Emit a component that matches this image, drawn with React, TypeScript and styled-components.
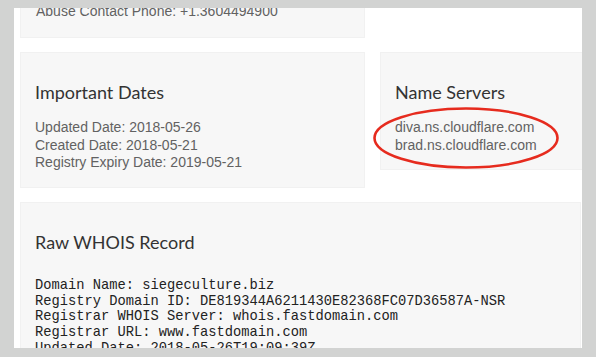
import React from 'react';
import styled, { createGlobalStyle } from 'styled-components';

const GlobalStyle = createGlobalStyle`
  html, body {
    margin: 0;
    padding: 0;
    background: #d2d3d2;
  }
`;

const importantDates = [
  'Updated Date: 2018-05-26',
  'Created Date: 2018-05-21',
  'Registry Expiry Date: 2019-05-21',
];

const nameServers = ['diva.ns.cloudflare.com', 'brad.ns.cloudflare.com'];

const rawWhois = [
  'Domain Name: siegeculture.biz',
  'Registry Domain ID: DE819344A6211430E82368FC07D36587A-NSR',
  'Registrar WHOIS Server: whois.fastdomain.com',
  'Registrar URL: www.fastdomain.com',
  'Updated Date: 2018-05-26T19:09:39Z',
  'Creation Date: 2018-05-21T15:30:18Z',
];

const App: React.FC = () => {
  return (
    <>
      <GlobalStyle />
      <Frame>
        <Window>
          <Page>
            <Row>
              <Card $top>
                <Line>Abuse Contact Phone: +1.3604494900</Line>
              </Card>
            </Row>

            <Row $bleed>
              <Card>
                <Heading>Important Dates</Heading>
                <Lines>
                  {importantDates.map((d) => (
                    <Line key={d}>{d}</Line>
                  ))}
                </Lines>
              </Card>
              <Card>
                <Heading>Name Servers</Heading>
                <Lines>
                  {nameServers.map((ns) => (
                    <Line key={ns}>{ns}</Line>
                  ))}
                </Lines>
                <Circle viewBox="0 0 190 66">
                  <ellipse
                    cx="95"
                    cy="33"
                    rx="91.5"
                    ry="29.5"
                    fill="none"
                    stroke="#e62b1e"
                    strokeWidth="2.6"
                  />
                </Circle>
              </Card>
            </Row>

            <Card $wide>
              <Heading>Raw WHOIS Record</Heading>
              <Record>{rawWhois.join('\n')}</Record>
            </Card>
          </Page>
        </Window>
      </Frame>
    </>
  );
};

export default App;

const Frame = styled.div`
  height: 357px;
  box-sizing: border-box;
  padding: 8px 14px 9px 14px;
  overflow: hidden;
`;

const Window = styled.div`
  height: 340px;
  background: #fff;
  overflow: hidden;
`;

const Page = styled.div`
  display: flex;
  flex-direction: column;
  gap: 14px;
  margin-top: -6px;
  padding: 0 1px 0 6px;
`;

const Row = styled.div<{ $bleed?: boolean }>`
  display: grid;
  grid-template-columns: 345px 1fr;
  gap: 15px;
  align-items: start;
  margin-right: ${(p) => (p.$bleed ? '-20px' : '0')};
`;

const Card = styled.div<{ $top?: boolean; $wide?: boolean }>`
  position: relative;
  background: #f7f7f7;
  border: 1px solid #f1f1f1;
  box-sizing: border-box;
  padding: ${(p) => (p.$top ? '0 15px 16px' : '29px 14px 15px')};
  min-height: ${(p) => (p.$wide ? '200px' : 'auto')};
`;

const Heading = styled.h3`
  margin: 0 0 16px;
  font-family: Lato, 'Open Sans', sans-serif;
  font-weight: 400;
  font-size: 18px;
  line-height: 21.6px;
  color: #333;
`;

const Lines = styled.div`
  display: flex;
  flex-direction: column;
`;

const Line = styled.div`
  font-family: 'Liberation Sans', Arial, sans-serif;
  font-size: 14px;
  line-height: 17.5px;
  color: #626262;
  white-space: nowrap;
`;

const Record = styled.pre`
  margin: 25px 0 0;
  font-family: 'Liberation Mono', 'Courier New', monospace;
  font-size: 13.75px;
  line-height: 15.6px;
  color: #222;
  white-space: pre;
`;

const Circle = styled.svg`
  position: absolute;
  left: -10px;
  top: 52px;
  width: 190px;
  height: 66px;
  pointer-events: none;
`;
